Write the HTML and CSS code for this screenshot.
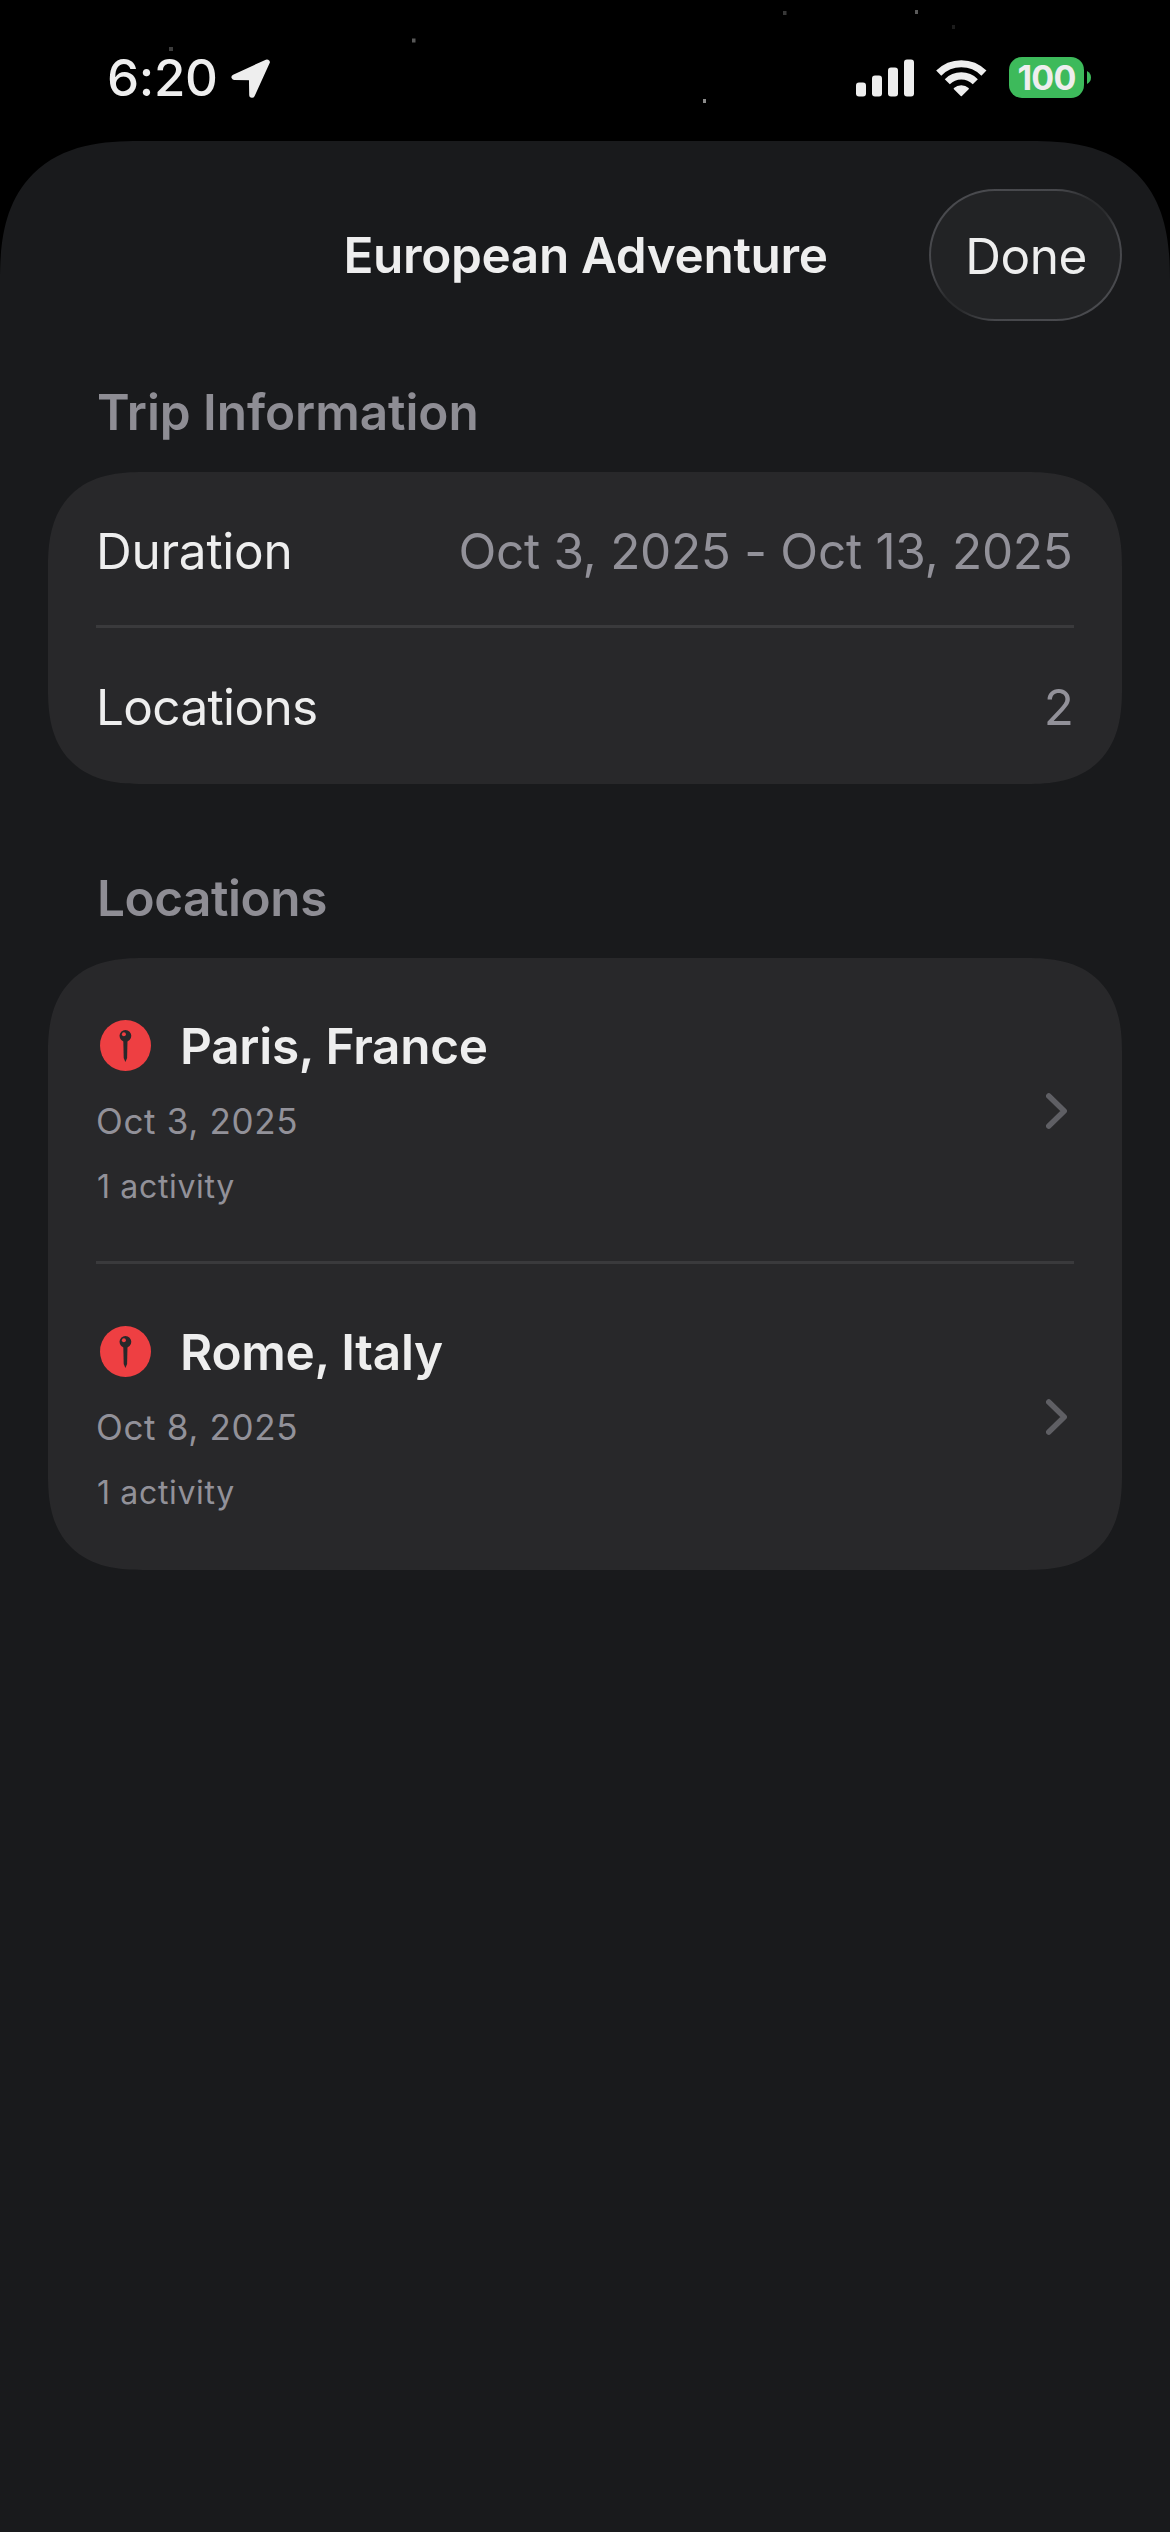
FILE: index.html
```html
<!DOCTYPE html>
<html lang="en">
<head>
  <meta charset="utf-8">
  <title>European Adventure</title>
  <link rel="stylesheet" href="styles.css">
</head>
<body>
  <svg class="stars" width="1170" height="141" viewBox="0 0 1170 141" aria-hidden="true">
    <rect x="169" y="47" width="4" height="4" fill="#3c3c3c"/>
    <rect x="412" y="38.500" width="3.500" height="4" fill="#585858"/>
    <rect x="783" y="11" width="3.500" height="4" fill="#383838"/>
    <rect x="915" y="10" width="3" height="4" fill="#5a5a5a"/>
    <rect x="952" y="25" width="3" height="4" fill="#1c1c1c"/>
    <rect x="703" y="99" width="3" height="4" fill="#8a8a8a"/>
  </svg>

  <div class="status">
    <span class="time">6:20</span>
    <svg class="arrow" width="40" height="40" viewBox="0 0 40 40">
      <path d="M36 3.200 3.300 18.200 20.700 18.500 21 36Z"/>
    </svg>
    <svg class="signal" width="58" height="38" viewBox="0 0 58 38">
      <rect x="0" y="23.500" width="10" height="14" rx="3"/>
      <rect x="16" y="16.500" width="10" height="21" rx="3"/>
      <rect x="32" y="8.500" width="10" height="29" rx="3"/>
      <rect x="48" y="0.500" width="10" height="37" rx="3"/>
    </svg>
    <svg class="wifi" width="51" height="38" viewBox="0 0 51 38">
      <path class="arc" d="M2.700 14.100A32 32 0 0 1 47.900 14.100M11.300 22.700A19.800 19.800 0 0 1 39.300 22.700"/>
      <path class="dot" d="M18.500 29.600A10 10 0 0 1 32.100 29.600L25.300 36.500Z"/>
    </svg>
    <div class="battery"><span class="level">100</span></div>
    <svg class="nub" width="4" height="13" viewBox="0 0 4 13"><path d="M0 0Q4 2.200 4 6.500T0 13Z"/></svg>
  </div>

  <main class="sheet">
    <header class="header">
      <h1 class="title">European Adventure</h1>
      <button class="done">Done</button>
    </header>

    <h2 class="section">Trip Information</h2>
    <div class="card">
      <div class="row line">
        <span class="duration">Duration</span>
        <span class="value range">Oct 3, 2025 - Oct 13, 2025</span>
      </div>
      <div class="row">
        <span class="count">Locations</span>
        <span class="value">2</span>
      </div>
    </div>

    <h2 class="section places">Locations</h2>
    <div class="card">
      <div class="place line">
        <div class="info">
          <div class="name">
            <svg class="pin" width="51" height="51" viewBox="0 0 51 51">
              <circle class="disc" cx="25.500" cy="25.500" r="25.500"/>
              <circle class="ink" cx="25.400" cy="15.800" r="5.900"/>
              <path class="ink" d="M23.300 20H27.500L27.100 38 25.400 42 23.700 38Z"/>
              <circle class="disc" cx="23.900" cy="14.300" r="2"/>
            </svg>
            <span class="city">Paris, France</span>
          </div>
          <div class="date">Oct 3, 2025</div>
          <div class="activity">1 activity</div>
        </div>
        <svg class="chevron" width="22" height="36" viewBox="0 0 22 36"><path d="M2.800 3 18.200 18 2.800 33"/></svg>
      </div>
      <div class="place">
        <div class="info">
          <div class="name">
            <svg class="pin" width="51" height="51" viewBox="0 0 51 51">
              <circle class="disc" cx="25.500" cy="25.500" r="25.500"/>
              <circle class="ink" cx="25.400" cy="15.800" r="5.900"/>
              <path class="ink" d="M23.300 20H27.500L27.100 38 25.400 42 23.700 38Z"/>
              <circle class="disc" cx="23.900" cy="14.300" r="2"/>
            </svg>
            <span class="city">Rome, Italy</span>
          </div>
          <div class="date">Oct 8, 2025</div>
          <div class="activity">1 activity</div>
        </div>
        <svg class="chevron" width="22" height="36" viewBox="0 0 22 36"><path d="M2.800 3 18.200 18 2.800 33"/></svg>
      </div>
    </div>
  </main>
</body>
</html>
```
FILE: styles.css
```css
* {
  box-sizing: border-box;
}

body {
  margin: 0;
  min-height: 2532px;
  display: flex;
  flex-direction: column;
  background: #000;
  color: #eee;
  font: 400 49.5px/60px Inter, "Liberation Sans", sans-serif;
}

.stars {
  position: absolute;
  top: 0;
  left: 0;
}

/* Status bar */
.status {
  display: flex;
  align-items: center;
  height: 141px;
  padding: 14px 79px 0 107px;
  fill: #eee;
}

.time {
  width: 110px;
  font-size: 51px;
  font-weight: 500;
  letter-spacing: -0.34px;
}

.arrow {
  margin: 2px 0 0 14px;
  stroke: #eee;
  stroke-width: 5.6px;
  stroke-linejoin: round;
}

.signal {
  margin-left: auto;
}

.wifi {
  margin-left: 22px;
}

.arc {
  fill: none;
  stroke: #eee;
  stroke-width: 7.2px;
}

.dot {
  stroke: #eee;
  stroke-width: 1.6px;
  stroke-linejoin: round;
}

.battery {
  display: flex;
  align-items: center;
  justify-content: center;
  width: 75px;
  height: 41px;
  margin-left: 22px;
  border-radius: 13px;
  background: #3dba5b;
}

.level {
  font-size: 34px;
  font-weight: 700;
  line-height: 41px;
  letter-spacing: -0.8px;
}

.nub {
  margin-left: 3px;
  fill: #3dba5b;
}

/* Sheet */
.sheet {
  flex: 1;
  padding: 48px 48px 0;
  background: #191a1c;
  border-radius: 114px 114px 0 0;
}

.header {
  display: grid;
  grid-template-columns: 193px 1fr 193px;
  align-items: center;
  height: 132px;
}

.title {
  grid-column: 2;
  margin: 0;
  padding-left: 1px;
  font-size: 49.5px;
  font-weight: 600;
  letter-spacing: -0.36px;
  text-align: center;
  white-space: nowrap;
}

.done {
  height: 132px;
  padding: 2px 0 0 1px;
  border: 2.5px solid transparent;
  border-radius: 66px;
  background:
    linear-gradient(#222325, #222325) padding-box,
    linear-gradient(to bottom right, #4b4c50 0, #46474b 34%, #2a2b2d 46%, #2a2b2d 54%, #46474b 66%, #4b4c50 100%) border-box;
  color: inherit;
  font: inherit;
  letter-spacing: -0.5px;
}

.section {
  margin: 61px 48px 30px;
  padding-left: 1px;
  color: #8e8d94;
  font-size: 49.5px;
  font-weight: 600;
  letter-spacing: -0.05px;
}

.places {
  margin-top: 84px;
  letter-spacing: -0.45px;
}

.card {
  padding: 0 48px;
  background: #28282a;
  border-radius: 78px;
}

@supports (corner-shape: superellipse(1.6)) {
  .sheet {
    border-radius: 140px 140px 0 0;
    corner-shape: superellipse(1.367);
  }

  .card {
    border-radius: 95px;
    corner-shape: superellipse(1.33);
  }
}

.line {
  box-shadow: inset 0 -3px #3a3a3c;
}

.row {
  display: flex;
  align-items: center;
  justify-content: space-between;
  height: 156px;
  padding-top: 2px;
}

.duration {
  letter-spacing: -0.26px;
}

.count {
  letter-spacing: -0.67px;
}

.value {
  color: #929199;
}

.range {
  margin-right: 1.5px;
  letter-spacing: -0.3px;
}

/* Location rows */
.place {
  display: flex;
  align-items: center;
  justify-content: space-between;
  height: 306px;
  padding-right: 6px;
}

.info {
  align-self: flex-start;
  padding-top: 58px;
}

.name {
  display: flex;
  align-items: center;
  gap: 29px;
  height: 60px;
  padding-left: 4px;
}

.city {
  font-weight: 600;
  letter-spacing: -0.28px;
}

.pin {
  margin-top: -1px;
}

.disc {
  fill: #ee3f42;
}

.ink {
  fill: #28282a;
}

.date,
.activity {
  color: #929199;
}

.date {
  margin-top: 24px;
  font-size: 35px;
  line-height: 42px;
  letter-spacing: 0.66px;
}

.activity {
  margin-top: 25px;
  padding-left: 1px;
  font-size: 32px;
  line-height: 40px;
  letter-spacing: 0.66px;
}

.chevron {
  fill: none;
  stroke: #5f5f64;
  stroke-width: 5.5px;
  stroke-linecap: round;
  stroke-linejoin: round;
}
```
